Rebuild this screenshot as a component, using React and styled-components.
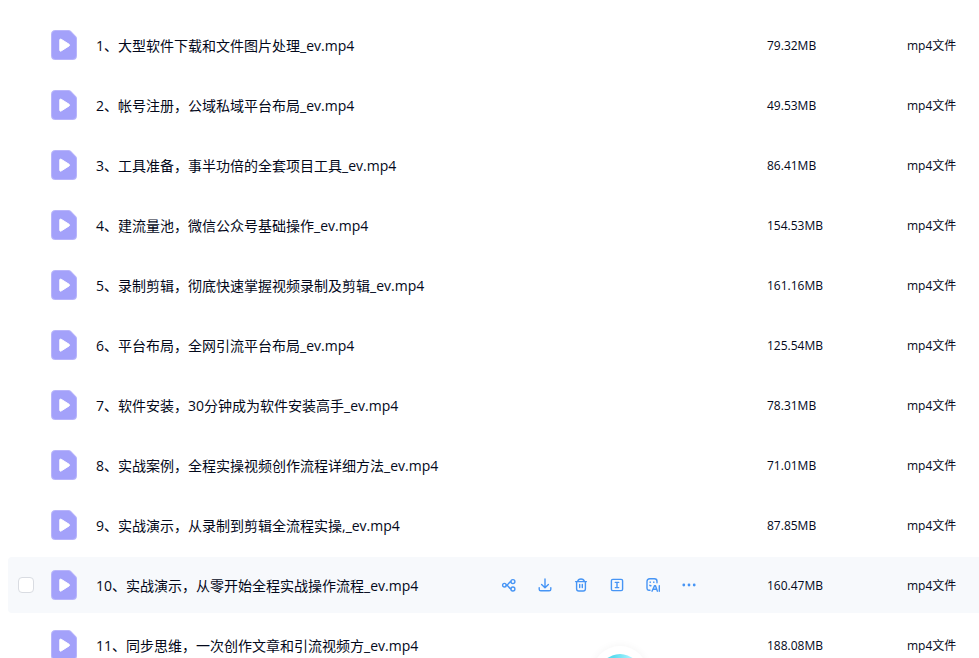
import React, { useState } from 'react';
import styled, { createGlobalStyle } from 'styled-components';

const GlobalStyle = createGlobalStyle`
    body {
        margin: 0;
        background: #fff;
        color: #03081a;
        font-family: "Open Sans", "Noto Sans CJK SC", sans-serif;
    }
    * { box-sizing: border-box; }
`
const Page = styled.main`
    height: 100vh;
    overflow: hidden;
    padding: 13px 0 0 8px;
`
const Table = styled.table`
    width: 100%;
    table-layout: fixed;
    border-collapse: separate;
    border-spacing: 0 4px;
`
const Col = styled.col`
    width: ${(props) => props.$width};
`
const Row = styled.tr`
    height: 56px;
    background: ${(props) => (props.$active ? '#f7f9fc' : 'transparent')};
`
const Cell = styled.td`
    padding: 0;
`
const TextCell = styled(Cell)`
    padding-top: 2px;
    font-size: 12px;
    line-height: 20px;
    white-space: nowrap;
`
const CheckCell = styled(Cell)`
    padding-left: 10px;
    border-radius: 4px 0 0 4px;
`
const Checkbox = styled.input`
    appearance: none;
    display: block;
    width: 16px;
    height: 16px;
    margin: 0;
    border: 1px solid #d9dce2;
    border-radius: 4px;
    background: #fff;
    cursor: pointer;
    visibility: ${(props) => (props.$shown ? 'visible' : 'hidden')};
    &:checked{
        background: #448ef6;
        border-color: #448ef6;
    }
`
const NameBox = styled.div`
    display: flex;
    align-items: center;
    padding-right: 60px;
`
const FileIcon = styled.svg`
    flex: none;
    width: 26px;
    height: 30px;
    margin-right: 19px;
`
const FileName = styled.a`
    padding-top: 2px;
    color: inherit;
    font-size: 14px;
    line-height: 20px;
    white-space: nowrap;
    text-decoration: none;
`
const Actions = styled.div`
    display: flex;
    margin-left: auto;
`
const ActionButton = styled.button`
    display: flex;
    align-items: center;
    justify-content: center;
    width: 36px;
    height: 32px;
    padding: 0;
    border: none;
    background: none;
    color: #4795f5;
    cursor: pointer;
`
const ActionIcon = styled.svg`
    width: 16px;
    height: 16px;
    fill: none;
    stroke: currentColor;
    stroke-width: 1.4;
    stroke-linecap: round;
    stroke-linejoin: round;
`
const Assistant = styled.button`
    position: fixed;
    left: calc(50% + 102px);
    bottom: -44px;
    width: 56px;
    height: 56px;
    padding: 8px;
    border: none;
    border-radius: 50%;
    background: #fff;
    box-shadow: 0 0 8px rgba(0, 0, 0, 0.05);
`
const Ball = styled.span`
    display: block;
    width: 40px;
    height: 40px;
    border-radius: 50%;
    background: linear-gradient(100deg, #5bdcee 30%, #a6f2ff 65%);
`

const files = [
    { name: '1、大型软件下载和文件图片处理_ev.mp4', size: '79.32MB' },
    { name: '2、帐号注册，公域私域平台布局_ev.mp4', size: '49.53MB' },
    { name: '3、工具准备，事半功倍的全套项目工具_ev.mp4', size: '86.41MB' },
    { name: '4、建流量池，微信公众号基础操作_ev.mp4', size: '154.53MB' },
    { name: '5、录制剪辑，彻底快速掌握视频录制及剪辑_ev.mp4', size: '161.16MB' },
    { name: '6、平台布局，全网引流平台布局_ev.mp4', size: '125.54MB' },
    { name: '7、软件安装，30分钟成为软件安装高手_ev.mp4', size: '78.31MB' },
    { name: '8、实战案例，全程实操视频创作流程详细方法_ev.mp4', size: '71.01MB' },
    { name: '9、实战演示，从录制到剪辑全流程实操,_ev.mp4', size: '87.85MB' },
    { name: '10、实战演示，从零开始全程实战操作流程_ev.mp4', size: '160.47MB' },
    { name: '11、同步思维，一次创作文章和引流视频方_ev.mp4', size: '188.08MB' },
];

const actions = [
    {
        label: '分享',
        icon: <>
            <circle cx="3.4" cy="8.2" r="1.8" />
            <circle cx="11.9" cy="4.6" r="2" />
            <circle cx="11.9" cy="12" r="2" />
            <path d="M5.2 8.2C7.6 8.2 7.4 5 9.9 4.8M5.2 8.2C7.8 8.2 7.6 11.4 9.9 11.8" />
        </>,
    },
    {
        label: '下载',
        icon: <path d="M8 2v8.6M4.6 7.4 8 10.8l3.4-3.4M2.2 10.6v1.6q0 1.6 1.6 1.6h8.4q1.6 0 1.6-1.6v-1.6" />,
    },
    {
        label: '删除',
        icon: <>
            <path d="M2.6 4.6h10.8M3.6 4.6v7.2q0 2.2 2.2 2.2h4.4q2.2 0 2.2-2.2V4.6M4.6 4.4q.6-2.4 3.4-2.4t3.4 2.4" />
            <path d="M6.7 7.4v3.2M9.3 7.4v3.2" />
        </>,
    },
    {
        label: '重命名',
        icon: <>
            <rect x="2.4" y="2.4" width="11.2" height="11.2" rx="1.4" />
            <path d="M6.3 5.4h3.4M6.3 10.6h3.4M8 5.4v5.2" />
        </>,
    },
    {
        label: 'AI',
        icon: <>
            <path d="M5 13.2H3.8Q2 13 2 11.2V4.6Q2 1.8 4.8 1.8h4.6q2.6 0 2.6 2.6v1.4M5.2 5v.4M8.8 5v.4M4.8 8.2q.5.6 1.2.6" />
            <path d="M7 14.2 9.6 8.6h.8l2 5.6M8.2 12.2h3.4M14.3 8.8v5.4" />
        </>,
    },
    {
        label: '更多',
        icon: <g fill="currentColor" stroke="none">
            <circle cx="2.8" cy="8" r="1.4" />
            <circle cx="8" cy="8" r="1.4" />
            <circle cx="13.2" cy="8" r="1.4" />
        </g>,
    },
];

const VideoIcon = () => {
    return <FileIcon viewBox="0 0 26 30" aria-hidden="true">
        <path d="M4.5 0H17.5Q19 0 20 1L25 6.2Q26 7.2 26 8.6V25.5Q26 30 21.5 30H4.5Q0 30 0 25.5V4.5Q0 0 4.5 0Z" fill="#b8b5fb" />
        <path d="M4.5 1H17.3Q18.6 1 19.4 1.8L24.2 6.8Q25 7.6 25 8.8V25.2Q25 29 21.2 29H4.8Q1 29 1 25.2V4.8Q1 1 4.5 1Z" fill="#a3a1fa" />
        <path d="M8.8 10v10.2q0 1.4 1.3.8l8-5.1q1-.8 0-1.6l-8-5.1Q8.8 8.6 8.8 10Z" fill="#fff" stroke="#fff" strokeWidth="1" strokeLinejoin="round" />
    </FileIcon>
}

const App = () => {
    const [active, setActive] = useState(9);
    const [checked, setChecked] = useState({});

    const handleCheck = (index) => {
        setChecked({ ...checked, [index]: !checked[index] });
    }

    return <>
        <GlobalStyle />
        <Page>
            <Table>
                <colgroup>
                    <Col $width="43px" />
                    <Col />
                    <Col $width="140px" />
                    <Col $width="72px" />
                </colgroup>
                <tbody>
                    {files.map((file, index) => (
                        <Row key={file.name} $active={active === index} onMouseEnter={() => setActive(index)}>
                            <CheckCell>
                                <Checkbox
                                    type="checkbox"
                                    aria-label={file.name}
                                    $shown={active === index || checked[index]}
                                    checked={!!checked[index]}
                                    onChange={() => handleCheck(index)}
                                />
                            </CheckCell>
                            <Cell>
                                <NameBox>
                                    <VideoIcon />
                                    <FileName href="#">{file.name}</FileName>
                                    {active === index && <Actions>
                                        {actions.map((action) => (
                                            <ActionButton key={action.label} type="button" aria-label={action.label}>
                                                <ActionIcon viewBox="0 0 16 16">{action.icon}</ActionIcon>
                                            </ActionButton>
                                        ))}
                                    </Actions>}
                                </NameBox>
                            </Cell>
                            <TextCell>{file.size}</TextCell>
                            <TextCell>mp4文件</TextCell>
                        </Row>
                    ))}
                </tbody>
            </Table>
        </Page>
        <Assistant type="button" aria-label="助手"><Ball /></Assistant>
    </>;
};

export default App;
